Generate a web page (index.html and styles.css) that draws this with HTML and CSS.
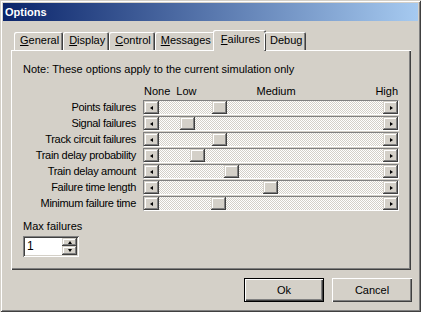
FILE: index.html
```html
<!DOCTYPE html>
<html lang="en">
<head>
    <meta charset="UTF-8">
    <title>Options</title>
    <link rel="stylesheet" href="styles.css">
</head>
<body>
    <div class="window">
        <div class="titlebar">Options</div>

        <div class="tabs">
            <span class="tab"><u>G</u>eneral</span>
            <span class="tab"><u>D</u>isplay</span>
            <span class="tab"><u>C</u>ontrol</span>
            <span class="tab"><u>M</u>essages</span>
            <span class="tab active"><u>F</u>ailures</span>
            <span class="tab">Debug</span>
        </div>

        <div class="panel">
            <p class="note">Note: These options apply to the current simulation only</p>

            <div class="scale">
                <span>None</span>
                <span class="low">Low</span>
                <span class="medium">Medium</span>
                <span class="high">High</span>
            </div>

            <div class="row">
                <span class="label">Points failures</span>
                <div class="scroll"><span class="sbtn"><i class="arr-l"></i></span><div class="track"><span class="thumb" style="margin-left:53px"></span></div><span class="sbtn"><i class="arr-r"></i></span></div>
            </div>
            <div class="row">
                <span class="label">Signal failures</span>
                <div class="scroll"><span class="sbtn"><i class="arr-l"></i></span><div class="track"><span class="thumb" style="margin-left:21px"></span></div><span class="sbtn"><i class="arr-r"></i></span></div>
            </div>
            <div class="row">
                <span class="label">Track circuit failures</span>
                <div class="scroll"><span class="sbtn"><i class="arr-l"></i></span><div class="track"><span class="thumb" style="margin-left:53px"></span></div><span class="sbtn"><i class="arr-r"></i></span></div>
            </div>
            <div class="row">
                <span class="label">Train delay probability</span>
                <div class="scroll"><span class="sbtn"><i class="arr-l"></i></span><div class="track"><span class="thumb" style="margin-left:31px"></span></div><span class="sbtn"><i class="arr-r"></i></span></div>
            </div>
            <div class="row">
                <span class="label">Train delay amount</span>
                <div class="scroll"><span class="sbtn"><i class="arr-l"></i></span><div class="track"><span class="thumb" style="margin-left:65px"></span></div><span class="sbtn"><i class="arr-r"></i></span></div>
            </div>
            <div class="row">
                <span class="label">Failure time length</span>
                <div class="scroll"><span class="sbtn"><i class="arr-l"></i></span><div class="track"><span class="thumb" style="margin-left:104px"></span></div><span class="sbtn"><i class="arr-r"></i></span></div>
            </div>
            <div class="row">
                <span class="label">Minimum failure time</span>
                <div class="scroll"><span class="sbtn"><i class="arr-l"></i></span><div class="track"><span class="thumb" style="margin-left:52px"></span></div><span class="sbtn"><i class="arr-r"></i></span></div>
            </div>

            <div class="maxf">
                <span class="maxlabel">Max failures</span>
                <div class="spin">
                    <span class="val">1</span>
                    <div class="spinbtns">
                        <span class="sp up"><i class="arr-u"></i></span>
                        <span class="sp down"><i class="arr-d"></i></span>
                    </div>
                </div>
            </div>
        </div>

        <div class="buttons">
            <button class="btn default">Ok</button>
            <button class="btn">Cancel</button>
        </div>
    </div>
</body>
</html>
```

FILE: styles.css
```css
* {
    margin: 0;
    padding: 0;
    box-sizing: border-box;
}

body {
    background-color: #d4d0c8;
    font-family: "Liberation Sans", Arial, sans-serif;
    font-size: 11px;
    color: black;
}

.window {
    width: 421px;
    height: 312px;
    padding: 3px;
    background-color: #d4d0c8;
    box-shadow: inset 1px 1px #d4d0c8, inset -1px -1px #404040, inset 2px 2px #fff, inset -2px -2px #808080;
}

.titlebar {
    height: 18px;
    line-height: 18px;
    padding-left: 2px;
    color: white;
    font-weight: bold;
    background: linear-gradient(to right, #0a246a, #a6caf0);
}

/* tabs */
.tabs {
    display: flex;
    align-items: flex-end;
    height: 20px;
    margin: 9px 0 0 11px;
    position: relative;
    z-index: 1;
}

.tab {
    height: 18px;
    line-height: 17px;
    padding: 0 4px 0 6px;
    border-radius: 2px 2px 0 0;
    box-shadow: inset 1px 1px #fff, inset -1px 0 #404040, inset -2px 0 #808080;
}

.tab.active {
    height: 21px;
    line-height: 19px;
    margin: 0 -2px -1px -2px;
    padding: 0 6px 0 8px;
    background-color: #d4d0c8;
}

.panel {
    margin: 0 7px 0 8px;
    height: 220px;
    padding: 13px 0 0 12px;
    box-shadow: inset 1px 1px #fff, inset -1px -1px #404040, inset -2px -2px #808080;
}

.note {
    line-height: 13px;
}

.scale {
    display: flex;
    width: 254px;
    margin: 9px 0 0 121px;
    line-height: 13px;
}

.low {
    margin-left: 6px;
}

.medium {
    margin-left: 60px;
}

.high {
    margin-left: auto;
}

/* slider rows */
.row {
    display: flex;
    height: 15px;
    margin-bottom: 1px;
}

.scale + .row {
    margin-top: 2px;
}

.label {
    width: 113px;
    margin-right: 7px;
    text-align: right;
    line-height: 15px;
    letter-spacing: -0.3px;
}

.scroll {
    display: flex;
    width: 256px;
    height: 15px;
    border: 1px solid;
    border-color: #808080 #fff #fff #808080;
}

.sbtn, .thumb, .sp {
    display: flex;
    align-items: center;
    justify-content: center;
    background-color: #d4d0c8;
    box-shadow: inset -1px -1px #404040, inset 1px 1px #d4d0c8, inset -2px -2px #808080, inset 2px 2px #fff;
}

.sbtn {
    width: 15px;
    height: 13px;
}

.track {
    flex: 1;
    display: flex;
    background: repeating-conic-gradient(#fff 0 25%, #d4d0c8 0 50%) 0 0 / 2px 2px;
}

.thumb {
    width: 15px;
    height: 13px;
}

.arr-l, .arr-r {
    width: 0;
    height: 1px;
    border-top: 2px solid transparent;
    border-bottom: 2px solid transparent;
}

.arr-l {
    border-right: 3px solid black;
}

.arr-r {
    border-left: 3px solid black;
    margin-left: 1px;
}

/* max failures */
.maxf {
    margin-top: 9px;
}

.maxlabel {
    display: block;
    line-height: 13px;
}

.spin {
    display: flex;
    width: 56px;
    height: 21px;
    margin-top: 3px;
    padding: 2px;
    background-color: white;
    box-shadow: inset 1px 1px #808080, inset -1px -1px #fff, inset 2px 2px #404040, inset -2px -2px #d4d0c8;
}

.val {
    flex: 1;
    padding-left: 2px;
    line-height: 17px;
    font-size: 12px;
}

.spinbtns {
    display: flex;
    flex-direction: column;
    width: 15px;
}

.sp {
    height: 8px;
}

.sp.down {
    height: 9px;
}

.arr-u, .arr-d {
    width: 1px;
    height: 0;
    border-left: 2px solid transparent;
    border-right: 2px solid transparent;
}

.arr-u {
    border-bottom: 3px solid black;
}

.arr-d {
    border-top: 3px solid black;
}

/* dialog buttons */
.buttons {
    display: flex;
    justify-content: flex-end;
    gap: 8px;
    margin: 8px 6px 0 0;
}

.btn {
    width: 80px;
    height: 24px;
    border: none;
    background-color: #d4d0c8;
    font-family: "Liberation Sans", Arial, sans-serif;
    font-size: 11px;
    color: black;
    box-shadow: inset 1px 1px #fff, inset -1px -1px #404040, inset -2px -2px #808080;
}

.btn.default {
    border: 1px solid black;
}
```
